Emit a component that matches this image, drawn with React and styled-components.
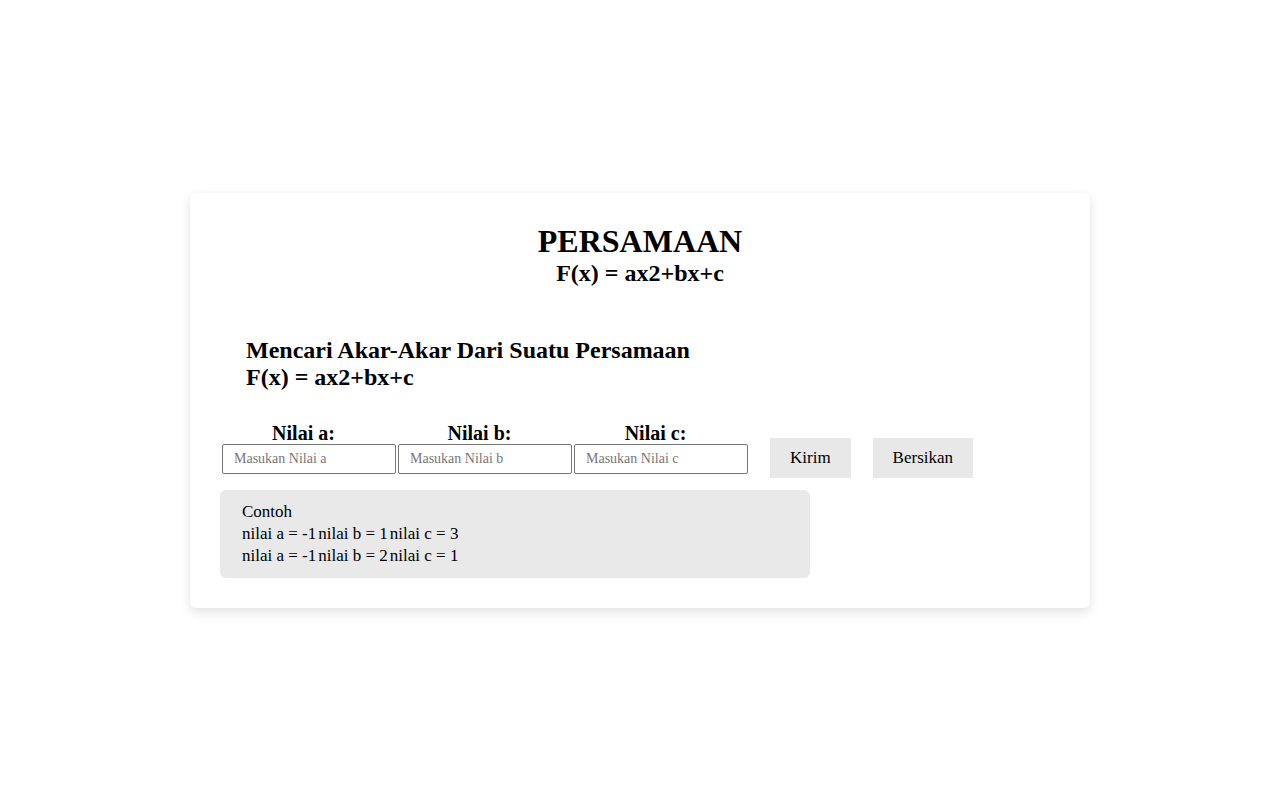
import React, { useState } from "react";
import styled, { createGlobalStyle } from "styled-components";

const Global = createGlobalStyle`
  html, body {
    margin: 0;
    padding: 0;
    background: #ffffff;
  }
  body {
    font-family: "Liberation Serif", "Times New Roman", serif;
    color: #000;
  }
`;

const Page = styled.div`
  min-height: 100vh;
  display: flex;
  align-items: center;
  justify-content: center;
`;

const Card = styled.div`
  width: 900px;
  box-sizing: border-box;
  padding: 30px;
  background: #fff;
  border-radius: 6px;
  box-shadow: 0 4px 12px rgba(0, 0, 0, 0.12);
`;

const Title = styled.h1`
  margin: 0;
  text-align: center;
  font-size: 32px;
  font-weight: bold;
  line-height: normal;
`;

const Subtitle = styled.h3`
  margin: 0;
  text-align: center;
  font-size: 24px;
  font-weight: bold;
  line-height: normal;
`;

const Heading = styled.h2`
  margin: 50px 0 0 26px;
  font-size: 24px;
  font-weight: bold;
  line-height: 27px;
`;

const Row = styled.div`
  display: flex;
  align-items: flex-end;
  margin-top: 31px;
`;

const Field = styled.div`
  display: flex;
  flex-direction: column;
  margin-left: 2px;
  padding-bottom: 4px;
`;

const Label = styled.label`
  text-align: center;
  font-size: 20px;
  font-weight: bold;
  line-height: 22px;
  padding-right: 11px;
`;

const Input = styled.input`
  width: 174px;
  height: 30px;
  box-sizing: border-box;
  border: 1px solid #767676;
  border-radius: 2px;
  padding: 0 11px;
  font-family: "Liberation Serif", "Times New Roman", serif;
  font-size: 14px;
  outline: none;
  &::placeholder {
    color: #777;
  }
`;

const Button = styled.button`
  height: 40px;
  margin-left: 22px;
  padding: 0 20px;
  border: none;
  background: #e8e8e8;
  font-family: "Liberation Serif", "Times New Roman", serif;
  font-size: 17px;
  color: #000;
  cursor: pointer;
`;

const Example = styled.div`
  margin-top: 12px;
  width: 590px;
  box-sizing: border-box;
  padding: 11px 22px;
  background: #e9e9e9;
  border-radius: 6px;
  font-size: 17px;
  line-height: 22px;
`;

const Line = styled.div`
  display: flex;
  gap: 2px;
`;

const examples = [
  ["-1", "1", "3"],
  ["-1", "2", "1"],
];

export default function App() {
  const [vals, setVals] = useState({ a: "", b: "", c: "" });
  const set = (k) => (e) => setVals({ ...vals, [k]: e.target.value });

  return (
    <>
      <Global />
      <Page>
        <Card>
          <Title>PERSAMAAN</Title>
          <Subtitle>F(x) = ax2+bx+c</Subtitle>
          <Heading>
            Mencari Akar-Akar Dari Suatu Persamaan
            <br />
            F(x) = ax2+bx+c
          </Heading>
          <Row>
            <Field>
              <Label>Nilai a:</Label>
              <Input placeholder="Masukan Nilai a" value={vals.a} onChange={set("a")} />
            </Field>
            <Field>
              <Label>Nilai b:</Label>
              <Input placeholder="Masukan Nilai b" value={vals.b} onChange={set("b")} />
            </Field>
            <Field>
              <Label>Nilai c:</Label>
              <Input placeholder="Masukan Nilai c" value={vals.c} onChange={set("c")} />
            </Field>
            <Button>Kirim</Button>
            <Button onClick={() => setVals({ a: "", b: "", c: "" })}>Bersikan</Button>
          </Row>
          <Example>
            <div>Contoh</div>
            {examples.map(([a, b, c], i) => (
              <Line key={i}>
                <span>nilai a = {a}</span>
                <span>nilai b = {b}</span>
                <span>nilai c = {c}</span>
              </Line>
            ))}
          </Example>
        </Card>
      </Page>
    </>
  );
}
